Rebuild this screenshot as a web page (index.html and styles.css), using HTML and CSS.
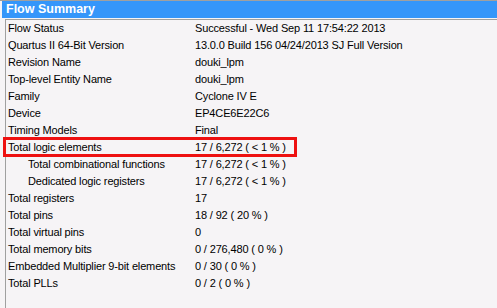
FILE: index.html
```html
<!DOCTYPE html>
<html lang="en">
<head>
    <meta charset="UTF-8">
    <title>Flow Summary</title>
    <link rel="stylesheet" href="styles.css">
</head>
<body>
    <div class="panel">
        <div class="title">Flow Summary</div>
        <div class="summary">
            <div class="row"><span class="label">Flow Status</span><span class="value">Successful - Wed Sep 11 17:54:22 2013</span></div>
            <div class="row"><span class="label">Quartus II 64-Bit Version</span><span class="value">13.0.0 Build 156 04/24/2013 SJ Full Version</span></div>
            <div class="row"><span class="label">Revision Name</span><span class="value">douki_lpm</span></div>
            <div class="row"><span class="label">Top-level Entity Name</span><span class="value">douki_lpm</span></div>
            <div class="row"><span class="label">Family</span><span class="value">Cyclone IV E</span></div>
            <div class="row"><span class="label">Device</span><span class="value">EP4CE6E22C6</span></div>
            <div class="row"><span class="label">Timing Models</span><span class="value">Final</span></div>
            <div class="row marked"><span class="label">Total logic elements</span><span class="value">17 / 6,272 ( &lt; 1 % )</span></div>
            <div class="row sub"><span class="label">Total combinational functions</span><span class="value">17 / 6,272 ( &lt; 1 % )</span></div>
            <div class="row sub"><span class="label">Dedicated logic registers</span><span class="value">17 / 6,272 ( &lt; 1 % )</span></div>
            <div class="row"><span class="label">Total registers</span><span class="value">17</span></div>
            <div class="row"><span class="label">Total pins</span><span class="value">18 / 92 ( 20 % )</span></div>
            <div class="row"><span class="label">Total virtual pins</span><span class="value">0</span></div>
            <div class="row"><span class="label">Total memory bits</span><span class="value">0 / 276,480 ( 0 % )</span></div>
            <div class="row"><span class="label">Embedded Multiplier 9-bit elements</span><span class="value">0 / 30 ( 0 % )</span></div>
            <div class="row"><span class="label">Total PLLs</span><span class="value">0 / 2 ( 0 % )</span></div>
        </div>
    </div>
</body>
</html>
```

FILE: styles.css
```css
body {
    margin: 0;
    background: #f6f4f6;
    font-family: "Liberation Sans", Arial, sans-serif;
    font-size: 11px;
    letter-spacing: -0.15px;
    color: #000;
}
.panel {
    border-top: 1px solid #a0a0a0;
    height: 307px;
}
.title {
    margin-left: 2px;
    height: 17px;
    line-height: 17px;
    padding-left: 4px;
    background: #3596fa;
    color: #fff;
    font-weight: bold;
    font-size: 12.5px;
    letter-spacing: 0;
}
.summary {
    margin-top: 1px;
    border-top: 1px solid #a0a0a0;
    margin-left: 5px;
    border-left: 1px solid #a0a0a0;
    height: 288px;
}
.row {
    display: flex;
    height: 17px;
    line-height: 17px;
    padding-left: 2px;
}
.label {
    width: 187px;
    flex-shrink: 0;
    white-space: nowrap;
}
.sub .label {
    padding-left: 20px;
    width: 167px;
}
.value {
    white-space: nowrap;
}
.marked {
    position: relative;
}
.marked::after {
    content: "";
    position: absolute;
    left: -3px;
    top: -2px;
    width: 288px;
    height: 14px;
    border: 3px solid #ee1111;
}
```
